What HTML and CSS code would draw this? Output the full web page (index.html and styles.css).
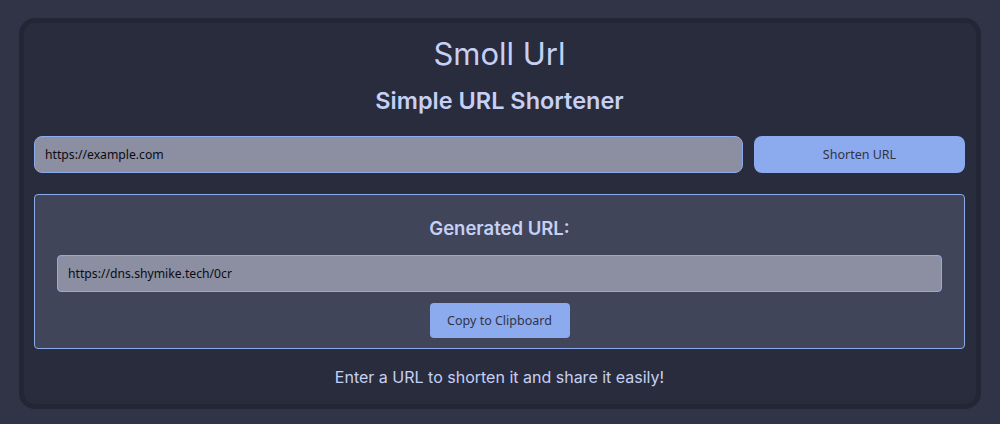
FILE: index.html
```html
<!DOCTYPE html>
<html lang="en">
<head>
<meta charset="utf-8">
<title>Smoll Url</title>
<link rel="stylesheet" href="styles.css">
</head>
<body>
<main class="card">
  <h1 class="title">Smoll Url</h1>
  <h2 class="subtitle">Simple URL Shortener</h2>
  <form class="shorten-row">
    <input class="url-input" type="text" value="https://example.com">
    <button class="btn shorten-btn" type="button">Shorten URL</button>
  </form>
  <section class="result">
    <h3 class="result-title">Generated URL:</h3>
    <input class="url-input result-input" type="text" value="https://dns.shymike.tech/0cr" readonly>
    <button class="btn copy-btn" type="button">Copy to Clipboard</button>
  </section>
  <p class="footer">Enter a URL to shorten it and share it easily!</p>
</main>
</body>
</html>
```

FILE: styles.css
```css
html, body {
  margin: 0;
  height: 100%;
}
body {
  background: #303446;
  padding: 18px 19px;
  box-sizing: border-box;
  font-family: Inter, "Noto Sans", sans-serif;
}
.card {
  background: #292c3c;
  border: 5px solid #232634;
  border-radius: 16px;
  padding: 10px 11px 0 10px;
  display: flex;
  flex-direction: column;
  align-items: stretch;
}
.title {
  margin: 0;
  text-align: center;
  color: #c6d0f5;
  font-weight: 400;
  font-size: 31px;
  line-height: 42px;
}
.subtitle {
  margin: 10px 0 0;
  text-align: center;
  color: #c6d0f5;
  font-weight: 600;
  font-size: 23.5px;
  line-height: 32px;
}
.shorten-row {
  margin: 19px 0 0;
  display: flex;
  gap: 11px;
}
.url-input {
  flex: 1;
  height: 37px;
  box-sizing: border-box;
  background: #8c8fa1;
  border: 1px solid #8caaee;
  border-radius: 8px;
  padding: 0 10px;
  font-family: "Noto Sans", sans-serif;
  font-size: 12.2px;
  color: #0b0b12;
  outline: none;
}
.btn {
  background: #8caaee;
  border: none;
  color: #303446;
  font-family: "Noto Sans", sans-serif;
  font-size: 12.5px;
  cursor: pointer;
}
.shorten-btn {
  width: 211px;
  height: 37px;
  border-radius: 8px;
}
.result {
  margin-top: 21px;
  background: #414559;
  border: 1px solid #8caaee;
  border-radius: 4px;
  padding: 0 22px 10px;
  display: flex;
  flex-direction: column;
  align-items: center;
}
.result-title {
  margin: 20px 0 0;
  color: #c6d0f5;
  font-size: 18.5px;
  font-weight: 600;
  line-height: 26px;
}
.result-input {
  align-self: stretch;
  margin-top: 14px;
  flex: none;
  border-radius: 4px;
}
.copy-btn {
  margin-top: 11px;
  width: 140px;
  height: 35px;
  border-radius: 4px;
}
.footer {
  margin: 17px 0 16px;
  text-align: center;
  color: #c6d0f5;
  font-size: 16px;
  line-height: 22px;
}
```
